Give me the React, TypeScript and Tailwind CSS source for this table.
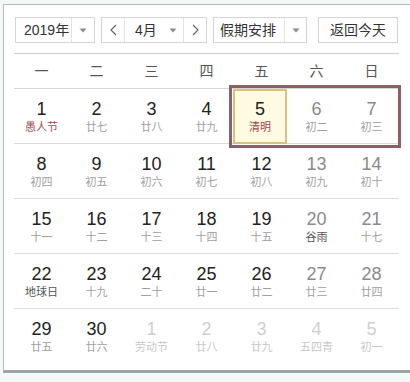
import React from "react";

type Cell = { d: number; l: string; kind: "norm" | "wkd" | "next"; lc?: string };

const rows: Cell[][] = [
  [
    { d: 1, l: "愚人节", kind: "norm", lc: "text-[#9b4f58]" },
    { d: 2, l: "廿七", kind: "norm" },
    { d: 3, l: "廿八", kind: "norm" },
    { d: 4, l: "廿九", kind: "norm" },
    { d: 5, l: "清明", kind: "norm", lc: "text-[#a1464f]" },
    { d: 6, l: "初二", kind: "wkd" },
    { d: 7, l: "初三", kind: "wkd" },
  ],
  [
    { d: 8, l: "初四", kind: "norm" },
    { d: 9, l: "初五", kind: "norm" },
    { d: 10, l: "初六", kind: "norm" },
    { d: 11, l: "初七", kind: "norm" },
    { d: 12, l: "初八", kind: "norm" },
    { d: 13, l: "初九", kind: "wkd" },
    { d: 14, l: "初十", kind: "wkd" },
  ],
  [
    { d: 15, l: "十一", kind: "norm" },
    { d: 16, l: "十二", kind: "norm" },
    { d: 17, l: "十三", kind: "norm" },
    { d: 18, l: "十四", kind: "norm" },
    { d: 19, l: "十五", kind: "norm" },
    { d: 20, l: "谷雨", kind: "wkd", lc: "text-[#555]" },
    { d: 21, l: "十七", kind: "wkd" },
  ],
  [
    { d: 22, l: "地球日", kind: "norm", lc: "text-[#555]" },
    { d: 23, l: "十九", kind: "norm" },
    { d: 24, l: "二十", kind: "norm" },
    { d: 25, l: "廿一", kind: "norm" },
    { d: 26, l: "廿二", kind: "norm" },
    { d: 27, l: "廿三", kind: "wkd" },
    { d: 28, l: "廿四", kind: "wkd" },
  ],
  [
    { d: 29, l: "廿五", kind: "norm" },
    { d: 30, l: "廿六", kind: "norm" },
    { d: 1, l: "劳动节", kind: "next" },
    { d: 2, l: "廿八", kind: "next" },
    { d: 3, l: "廿九", kind: "next" },
    { d: 4, l: "五四青", kind: "next" },
    { d: 5, l: "初一", kind: "next" },
  ],
];

const weekdays = ["一", "二", "三", "四", "五", "六", "日"];

function Arrow() {
  return (
    <svg width="8" height="5" viewBox="0 0 8 5">
      <path d="M0.5 0.5 L7.5 0.5 L4 4.5 Z" fill="#8a8a8a" />
    </svg>
  );
}

function Chevron({ dir }: { dir: "l" | "r" }) {
  return (
    <svg width="7" height="12" viewBox="0 0 7 12">
      <path
        d={dir === "l" ? "M6 1 L1 6 L6 11" : "M1 1 L6 6 L1 11"}
        stroke="#666"
        strokeWidth="1.2"
        fill="none"
      />
    </svg>
  );
}

function DayCell({ c }: { c: Cell }) {
  const numColor =
    c.kind === "norm" ? "text-[#222]" : c.kind === "wkd" ? "text-[#8a8a8a]" : "text-[#cfcfcf]";
  const lunarColor = c.lc ?? (c.kind === "next" ? "text-[#c8c8c8]" : "text-[#a0a0a0]");
  return (
    <div className="flex flex-col items-center justify-center h-full">
      <div className={`text-[18px] leading-[20px] ${numColor}`}>{c.d}</div>
      <div className={`text-[11px] leading-[14px] mt-[1px] whitespace-nowrap ${lunarColor}`}>{c.l}</div>
    </div>
  );
}

export default function App() {
  return (
    <div
      className="w-[410px] h-[382px] bg-[#f3f9f9] overflow-hidden pt-[4px] pl-[3px]"
      style={{ fontFamily: '"Liberation Sans", Arial, "Noto Sans CJK SC", sans-serif' }}
    >
      <div className="w-[420px] h-[369px] bg-white border-l border-t border-[#b8bcbc] border-b-[3px] border-b-[#9ea3a3] pt-[12px] pl-[10px]">
        {/* controls */}
        <div className="flex items-center h-[26px] ml-[1px] text-[14px] text-[#333]">
          <div className="flex items-center h-full w-[80px] border border-[#d4d4d4] bg-white">
            <div className="w-[55px] pl-[8px]">2019年</div>
            <div className="w-px h-full bg-[#e2e2e2]" />
            <div className="flex-1 flex justify-center"><Arrow /></div>
          </div>
          <div className="flex items-center h-full w-[106px] ml-[6px] border border-[#d4d4d4] bg-white">
            <div className="w-[22px] flex justify-center"><Chevron dir="l" /></div>
            <div className="w-px h-full bg-[#e2e2e2]" />
            <div className="w-[38px] pl-[10px]">4月</div>
            <div className="flex-1 flex justify-center"><Arrow /></div>
            <div className="w-px h-full bg-[#e2e2e2]" />
            <div className="w-[22px] flex justify-center"><Chevron dir="r" /></div>
          </div>
          <div className="flex items-center h-full w-[94px] ml-[6px] border border-[#d4d4d4] bg-white">
            <div className="w-[70px] pl-[6px]">假期安排</div>
            <div className="w-px h-full bg-[#e2e2e2]" />
            <div className="flex-1 flex justify-center"><Arrow /></div>
          </div>
          <div className="flex items-center justify-center h-full w-[80px] ml-[11px] border border-[#d4d4d4] bg-white">
            返回今天
          </div>
        </div>

        <div className="w-[385px] mt-[10px] border-t border-[#cfcfcf]" />

        {/* header */}
        <div className="grid grid-cols-7 w-[385px] h-[34px] items-center text-[14px] text-[#555]">
          {weekdays.map((w) => (
            <div key={w} className="text-center">{w}</div>
          ))}
        </div>

        {/* grid */}
        <div className="w-[385px] relative">
          {rows.map((r, i) => (
            <div
              key={i}
              className={`grid grid-cols-7 h-[55px] ${i === 0 ? "border-t border-[#d6d6d6]" : "border-t border-[#dcdcdc]"}`}
            >
              {r.map((c, j) => (
                <DayCell key={j} c={c} />
              ))}
            </div>
          ))}
          {/* weekend highlight */}
          <div className="absolute left-[215px] top-[-3px] w-[172px] h-[63px] border-[3px] border-[#8c5f66] pointer-events-none" />
          <div className="absolute left-[219px] top-[1px] w-[54px] h-[55px] border-2 border-[#d9c27c] bg-[#fffbe3] flex flex-col items-center justify-center">
            <div className="text-[18px] leading-[20px] text-[#222]">5</div>
            <div className="text-[11px] leading-[14px] mt-[1px] text-[#a1464f]">清明</div>
          </div>
        </div>
      </div>
    </div>
  );
}
